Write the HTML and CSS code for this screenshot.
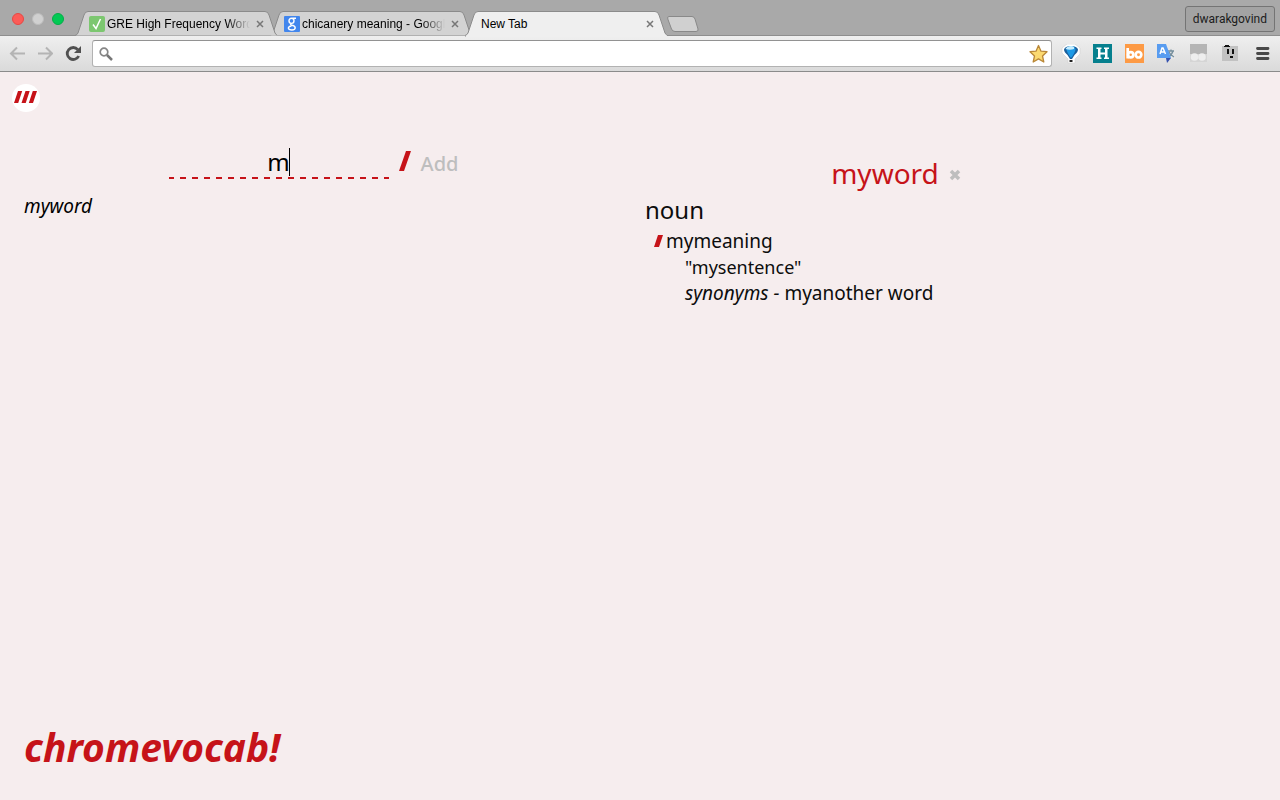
FILE: index.html
```html
<!DOCTYPE html>
<html lang="en">
<head>
<meta charset="utf-8">
<title>New Tab</title>
<link rel="stylesheet" href="styles.css">
</head>
<body>
<header class="browser">
  <div class="tabstrip">
    <div class="lights">
      <button class="light close" aria-label="Close window"></button>
      <button class="light minimise" aria-label="Minimise window"></button>
      <button class="light maximise" aria-label="Maximise window"></button>
    </div>
    <nav class="tabs" aria-label="Tabs">
      <div class="tab first">
        <svg class="shape" viewBox="0 0 202 26" aria-hidden="true"><path d="M0 24.500Q2 24 3 22L9 4Q10 .5 13 .5H190Q193 .5 194 4L200 22Q201 24 203 24.500"/></svg>
        <svg class="favicon" viewBox="0 0 16 16" aria-hidden="true"><rect width="16" height="16" rx="2" fill="#7cc770"/><path d="M4 8.500 7 12.500 11.500 3" fill="none" stroke="#fff" stroke-width="1.500"/></svg>
        <a class="label faded" href="#">GRE High Frequency Word</a>
        <button class="tab-close" aria-label="Close tab"><svg viewBox="0 0 8 8"><path d="M1 1 7 7M7 1 1 7"/></svg></button>
      </div>
      <div class="tab second">
        <svg class="shape" viewBox="0 0 202 26" aria-hidden="true"><path d="M0 24.500Q2 24 3 22L9 4Q10 .5 13 .5H190Q193 .5 194 4L200 22Q201 24 203 24.500"/></svg>
        <svg class="favicon" viewBox="0 0 16 16" aria-hidden="true"><rect width="16" height="16" rx="1" fill="#4286ed"/><g fill="none" stroke="#fff" stroke-width="1.400"><ellipse cx="7.500" cy="4.800" rx="2.500" ry="2.600"/><path d="M8.500 2.200H12M7.500 7.400Q5.500 8.500 8 9.300C13 10.500 11.500 14 8 14 3.500 14 3 10.500 7.500 10"/></g></svg>
        <a class="label faded" href="#">chicanery meaning - Googl</a>
        <button class="tab-close" aria-label="Close tab"><svg viewBox="0 0 8 8"><path d="M1 1 7 7M7 1 1 7"/></svg></button>
      </div>
      <div class="tab active">
        <svg class="shape" viewBox="0 0 202 26" aria-hidden="true"><path d="M0 26V24.500Q2 24 3 22L9 4Q10 .5 13 .5H190Q193 .5 194 4L200 22Q201 24 203 24.500V26"/></svg>
        <a class="label" href="#">New Tab</a>
        <button class="tab-close" aria-label="Close tab"><svg viewBox="0 0 8 8"><path d="M1 1 7 7M7 1 1 7"/></svg></button>
      </div>
    </nav>
    <button class="new-tab" aria-label="New tab"><svg viewBox="0 0 32 16"><path d="M2 .5H25Q27 .5 28 3L31 13Q31.500 15.500 29 15.500H8Q5.500 15.500 4.500 13L.8 3Q0 .5 2 .5Z"/></svg></button>
    <button class="profile">dwarakgovind</button>
  </div>
  <div class="toolbar">
    <div class="nav-buttons">
      <button class="icon" aria-label="Back"><svg viewBox="0 0 16 16"><path d="M16 7.500H2M8 1.500 2 7.500 8 13.500" fill="none" stroke="#b4b4b4" stroke-width="2"/></svg></button>
      <button class="icon" aria-label="Forward"><svg viewBox="0 0 16 16"><path d="M1 7.500H15M9 1.500 15 7.500 9 13.500" fill="none" stroke="#b4b4b4" stroke-width="2"/></svg></button>
      <button class="icon" aria-label="Reload"><svg viewBox="0 0 16 16"><path d="M12.800 3.600A6 6 0 1 0 13.700 10" fill="none" stroke="#505050" stroke-width="2.800"/><path d="M16 0V7H9Z" fill="#505050"/></svg></button>
    </div>
    <div class="omnibox">
      <svg class="search-icon" viewBox="0 0 14 14" aria-hidden="true"><circle cx="5" cy="5" r="3.800" fill="none" stroke="#868686" stroke-width="1.700"/><path d="M8 8 13 13" stroke="#777" stroke-width="2.500"/></svg>
      <input class="address" type="text" aria-label="Address">
      <button class="star" aria-label="Bookmark this page"><svg viewBox="0 0 20 20"><path d="M10.500 1.500 13 7.200 19 7.700 14.500 12 15.800 18 10.500 14.900 5.200 18 6.500 12 2 7.700 8 7.200Z" fill="#fbd971" stroke="#b98738" stroke-width="1.300" stroke-linejoin="round"/></svg></button>
    </div>
    <div class="extensions">
      <button class="ext" aria-label="Balloon"><svg viewBox="0 0 20 20"><path d="M6 0H14L19 4V10L14 15V19H7V15L1 9V4Z" fill="#fff" stroke="#d0d0d0" stroke-width=".6"/><path d="M3 5.500Q4 2 10 2T17 5.500Q17 8 13.500 11L11 15H9L6.500 11Q3 8 3 5.500Z" fill="#1b5f9c"/><path d="M5.500 5.500Q6 2 10 2T14.500 5.500Q14 9 10 14 6 9 5.500 5.500Z" fill="#1d9ae6"/><path d="M4.500 5Q6 2 10 2T13 5Q9 6.500 4.500 5Z" fill="#c5edff"/><path d="M8.500 16H11.500V18H8.500Z" fill="#222"/></svg></button>
      <button class="ext" aria-label="H"><svg viewBox="0 0 20 20"><rect width="19" height="19" fill="#06808e"/><path d="M3.500 3.500H8.500V5H7.500V8.500H12V5H11V3.500H16V5H14.500V13.500H16V15H11V13.500H12V10.500H7.500V13.500H8.500V15H3.500V13.500H5V5H3.500Z" fill="#fff"/></svg></button>
      <button class="ext" aria-label="bo"><svg viewBox="0 0 20 20"><rect width="19" height="19" fill="#fd9a45"/><g fill="none" stroke="#fff" stroke-width="2.700"><path d="M2.700 4V14.500"/><circle cx="5.700" cy="10.700" r="2.600"/><circle cx="13.500" cy="10.700" r="2.800"/></g></svg></button>
      <button class="ext" aria-label="Translate"><svg viewBox="0 0 20 20"><path d="M9 4H18V15H9Z" fill="#e6e6e6"/><path d="M11 7H17M14 5.500V7M16 7Q15 11 11 13M12 8Q13 11 17 13" fill="none" stroke="#768f9d" stroke-width="1.300"/><path d="M0 0H9L14 14H0Z" fill="#589cf0"/><path d="M9 14H14L10 19Z" fill="#3451af"/><path d="M3 10 5 4H6L8.500 10M4 8H7.500" fill="none" stroke="#fff" stroke-width="1.500"/></svg></button>
      <button class="ext" aria-label="Reader"><svg viewBox="0 0 20 20"><path d="M1 0H18V18H1Z" fill="#d5d5d5"/><path d="M1 0H18V10H1Z" fill="#b5b5b5"/><circle cx="5.500" cy="13" r="3.800" fill="#eee"/><circle cx="13" cy="13" r="3.800" fill="#eee"/></svg></button>
      <button class="ext" aria-label="Face"><svg viewBox="0 0 20 20"><path d="M1 2H17V17H1Z" fill="#c2c2c2"/><path d="M3 2H4V1H8V2H9V3H3ZM6 5H8V10H6ZM11 5H13V10H11ZM9 12H12V14H9Z" fill="#111"/></svg></button>
      <button class="ext" aria-label="Menu"><svg viewBox="0 0 20 20"><path d="M4.500 4.500H15M4.500 9.500H15M4.500 14.500H15" stroke="#484848" stroke-width="2.800" stroke-linecap="round"/></svg></button>
    </div>
  </div>
</header>
<main class="page">
  <a class="logo" href="#" aria-label="Home"><svg viewBox="0 0 28 28"><circle cx="14" cy="14" r="14" fill="#fff"/><path d="M6 7H10.200L6.200 19H2ZM13.500 7H17.700L13.700 19H9.500ZM20.800 7H25L21 19H16.800Z" fill="#c61319"/></svg></a>
  <div class="columns">
    <section class="words">
      <form class="add-form">
        <div class="word-field"><input class="word-input" type="text" value="m" aria-label="Word"><span class="caret"></span></div>
        <svg class="slash" viewBox="0 0 12 20" aria-hidden="true"><path d="M7 0H12L5 20H0Z"/></svg>
        <button class="add" type="button">Add</button>
      </form>
      <ul class="word-list"><li><a href="#">myword</a></li></ul>
    </section>
    <article class="entry">
      <div class="entry-head">
        <h1>myword</h1>
        <button class="remove" aria-label="Remove word"><svg viewBox="0 0 12 12"><path d="M2 2 10 10M10 2 2 10"/></svg></button>
      </div>
      <h2>noun</h2>
      <div class="meaning"><svg class="bullet" viewBox="0 0 10 12" aria-hidden="true"><path d="M4 0H9L5 12H0Z"/></svg><span>mymeaning</span></div>
      <p class="sentence">"mysentence"</p>
      <p class="synonyms"><em>synonyms -</em><span>myanother word</span></p>
    </article>
  </div>
  <footer class="brand">chromevocab!</footer>
</main>
</body>
</html>
```
FILE: styles.css
```css
* { box-sizing: border-box; }
body {
  margin: 0;
  min-height: 100vh;
  display: flex;
  flex-direction: column;
  background: #f6edee;
  color: #0c0c0c;
  font-family: "Noto Sans", sans-serif;
}
button { border: 0; padding: 0; background: none; font: inherit; }
svg { display: block; }
a { color: inherit; text-decoration: none; }
h1, h2, p, ul { margin: 0; padding: 0; font-weight: 400; }

/* Browser frame */
.browser { font-family: "Liberation Sans", sans-serif; }
.tabstrip {
  height: 36px;
  display: flex;
  align-items: flex-end;
  padding: 0 5px 0 12px;
  background: #a9a9a9;
  border-bottom: 1px solid #8e8e8e;
}
.lights { display: flex; gap: 8px; width: 63px; padding-bottom: 10px; }
.light { width: 12px; height: 12px; border-radius: 50%; }
.close { background: #fc5b57; border: 1px solid #e64843; }
.minimise { background: #d0d0d0; border: 1px solid #bdbdbd; }
.maximise { background: #02c954; border: 1px solid #05ad48; }
.tabs { display: flex; margin-bottom: -2px; isolation: isolate; }
.tab {
  position: relative;
  width: 202px;
  height: 26px;
  display: flex;
  align-items: center;
  padding: 0 13px 1px 14px;
}
.tab + .tab { margin-left: -7px; }
.first { z-index: 2; }
.second { z-index: 1; }
.active { z-index: 3; padding-left: 16px; }
.shape { position: absolute; inset: 0; width: 202px; height: 26px; z-index: -1; fill: #d3d3d3; stroke: #8b8b8b; }
.active .shape { fill: #efefef; }
.favicon { width: 16px; height: 16px; flex: none; margin-right: 2px; }
.label { flex: 1; white-space: nowrap; font-size: 12px; line-height: 16px; color: #000; }
.faded { -webkit-mask-image: linear-gradient(90deg, #000 82%, transparent 98%); mask-image: linear-gradient(90deg, #000 82%, transparent 98%); }
.tab-close { flex: none; width: 8px; height: 8px; margin-left: 3px; }
.tab-close path { stroke: #777; stroke-width: 1.500; }
.new-tab { width: 32px; height: 16px; margin-bottom: 3px; }
.new-tab path { fill: #d0d0d0; stroke: #898989; }
.profile {
  margin-left: auto;
  margin-bottom: 3px;
  height: 26px;
  padding: 0 7px;
  border: 1px solid #747474;
  border-radius: 3px;
  background: #a3a3a3;
  font: 12px/24px Roboto, sans-serif;
  color: #1c1c1c;
}
.toolbar {
  height: 36px;
  display: flex;
  align-items: center;
  padding: 0 7px 0 9px;
  background: linear-gradient(#efefef, #dadada);
  border-bottom: 1px solid #8b8b8b;
}
.nav-buttons { display: flex; gap: 12px; margin-right: 11px; }
.icon { width: 16px; height: 16px; }
.omnibox {
  flex: 1;
  height: 27px;
  display: flex;
  align-items: center;
  padding: 0 3px 0 6px;
  border: 1px solid #b2b2b2;
  border-top-color: #929292;
  border-radius: 3px;
  background: #fff;
}
.search-icon { width: 14px; height: 14px; }
.address { flex: 1; min-width: 0; height: 24px; border: 0; outline: 0; background: none; font-size: 14px; }
.star, .ext { width: 20px; height: 20px; }
.extensions { display: flex; gap: 12px; margin-left: 9px; }

/* Vocabulary page */
.page { flex: 1; display: flex; flex-direction: column; padding: 12px 0 29px; }
.logo { width: 28px; margin-left: 12px; }
.logo svg { width: 28px; height: 28px; }
.columns { display: grid; grid-template-columns: 1fr 1fr; }
.words { padding: 36px 37px 0 24px; }
.add-form { display: flex; justify-content: center; align-items: flex-start; gap: 10px; }
.word-field {
  position: relative;
  width: 220px;
  height: 31px;
  background: repeating-linear-gradient(90deg, #c61319 0 5px, transparent 5px 11px, #c61319 11px 12px) bottom / 100% 2px no-repeat;
}
.word-input {
  width: 100%;
  height: 28px;
  padding: 0;
  border: 0;
  outline: 0;
  background: none;
  text-align: center;
  font: 24px/28px "Noto Sans", sans-serif;
  color: #000;
}
.caret { position: absolute; top: 0; left: calc(50% + 10px); width: 1px; height: 28px; background: #000; }
.slash { width: 12px; height: 20px; margin-top: 3px; fill: #c61319; }
.add { font-size: 20px; line-height: 32px; font-weight: 500; color: #bebebe; }
.word-list { list-style: none; margin-top: 14px; font-size: 19px; line-height: 24px; font-style: italic; color: #000; }
.entry { padding: 43px 133px 0 5px; }
.entry-head { display: flex; justify-content: center; align-items: center; gap: 10px; }
h1 { font-size: 28px; line-height: 36px; color: #c61319; }
.remove { width: 12px; height: 12px; margin-top: 4px; }
.remove path { stroke: #bebebe; stroke-width: 3.500; }
h2 { padding-top: 1px; font-size: 24px; line-height: 36px; }
.meaning { display: flex; align-items: center; gap: 2px; padding-left: 9px; font-size: 19px; line-height: 26px; }
.bullet { width: 10px; height: 12px; fill: #c61319; }
.sentence, .synonyms { padding-left: 40px; line-height: 26px; }
.sentence { font-size: 18px; }
.synonyms { display: flex; gap: 5px; font-size: 19px; }
.brand { margin-top: auto; padding-left: 24px; font-size: 39px; line-height: 48px; font-weight: 700; font-style: italic; color: #c61319; }
```
